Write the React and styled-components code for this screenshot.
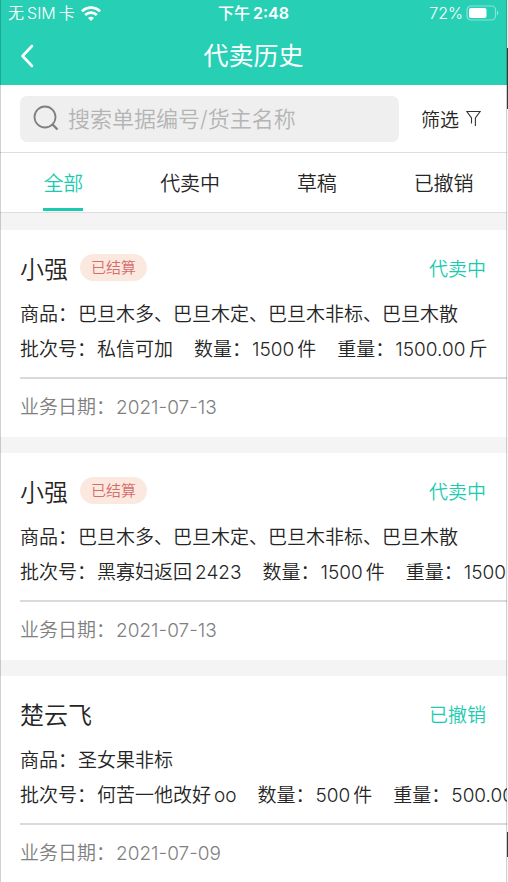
import React, { useState } from "react";
import styled, { createGlobalStyle } from "styled-components";

const GlobalStyle = createGlobalStyle`
  * { box-sizing: border-box; }
  body {
    margin: 0;
    background: #f4f4f4;
    color: #252525;
    font-family: Inter, "Noto Sans CJK SC", sans-serif;
    font-size: 19px;
    font-weight: 350;
  }
  button, input { font: inherit; color: inherit; border: 0; background: none; padding: 0; }
  button { cursor: pointer; }
`;

const Shell = styled.div`
  display: grid;
  grid-template-columns: minmax(0, 1fr) 1px;
  height: 100vh;
  overflow: hidden;
`;

const Backdrop = styled.div`
  background: linear-gradient(
    #e4eeee 48px, #34393c 48px, #34393c 109px, #f7f7f7 109px,
    #f7f7f7 832px, #34393c 832px, #34393c 857px, #f7f7f7 857px
  );
`;

const Screen = styled.div`
  position: relative;
  overflow: hidden;
  &::after {
    content: "";
    position: absolute;
    inset: 0;
    border: solid rgba(0, 0, 0, 0.18);
    border-width: 0 1px;
    pointer-events: none;
  }
`;

const Header = styled.header`
  background: #27cfb5;
  color: #fff;
`;

const StatusBar = styled.div`
  display: grid;
  grid-template-columns: 1fr auto 1fr;
  align-items: center;
  height: 26px;
  padding: 0 8px;
  font-size: 16px;
  line-height: 26px;
`;

const StatusGroup = styled.div`
  display: flex;
  align-items: center;
  justify-content: ${(p) => (p.$end ? "flex-end" : "flex-start")};
  gap: ${(p) => (p.$wide ? 6 : 3)}px;
  white-space: nowrap;
  font-weight: ${(p) => (p.$strong ? 600 : 350)};
`;

const ClockPrefix = styled.span`
  font-weight: 500;
`;

const NavBar = styled.div`
  display: grid;
  grid-template-columns: 60px 1fr 60px;
  align-items: center;
  height: 59px;
`;

const BackButton = styled.button`
  display: flex;
  padding: 8px 0 8px 20px;
`;

const Title = styled.h1`
  margin: 0;
  text-align: center;
  font-size: 25px;
  font-weight: 400;
  line-height: 36px;
`;

const SearchRow = styled.form`
  display: flex;
  align-items: center;
  height: 68px;
  padding: 0 26px 0 20px;
  gap: 22px;
  background: #fff;
  border-bottom: 1px solid #dedede;
`;

const SearchBox = styled.label`
  display: flex;
  align-items: center;
  flex: 1;
  min-width: 0;
  height: 46px;
  padding: 0 12px;
  gap: 8px;
  border-radius: 7px;
  background: #efefef;
  svg { flex: none; }
`;

const SearchInput = styled.input`
  flex: 1;
  min-width: 0;
  height: 100%;
  font-size: 22px;
  outline: none;
  &::placeholder { color: #b4b4b4; opacity: 1; }
`;

const FilterButton = styled.button`
  display: flex;
  align-items: center;
  gap: 7px;
  white-space: nowrap;
`;

const Tabs = styled.nav`
  display: grid;
  grid-template-columns: repeat(4, 1fr);
  height: 60px;
  background: #fff;
  border-bottom: 1px solid #dedede;
`;

const Tab = styled.button`
  justify-self: center;
  height: 58px;
  padding-top: 3px;
  font-size: 20px;
  color: ${(p) => (p.$active ? "#1bcbb0" : "inherit")};
  border-bottom: 3px solid ${(p) => (p.$active ? "#1bcbb0" : "transparent")};
`;

const List = styled.main`
  display: grid;
  gap: 16px;
  padding-top: 17px;
`;

const Card = styled.article`
  padding: 10px 0 0 20px;
  overflow: hidden;
  background: #fff;
`;

const CardHead = styled.div`
  display: flex;
  align-items: center;
  gap: 12px;
  height: 57px;
  padding: 0 21px 3px 0;
`;

const Name = styled.h2`
  margin: 0;
  font-size: 24px;
  font-weight: 350;
`;

const Badge = styled.span`
  padding: 0 11px;
  border-radius: 14px;
  background: #fbe9e0;
  color: #d66c6c;
  font-size: 15px;
  line-height: 27px;
`;

const State = styled.span`
  margin-left: auto;
  color: #1bcbb0;
`;

const Line = styled.div`
  display: flex;
  gap: 21px;
  line-height: 35px;
  white-space: nowrap;
`;

const Field = styled.span`
  display: flex;
  gap: 1px;
`;

const Mixed = styled.span`
  display: flex;
  gap: 3px;
`;

const CardFoot = styled.div`
  display: flex;
  gap: 1px;
  margin-top: 10px;
  border-top: 2px solid #dadada;
  color: #808080;
  line-height: 58px;
`;

const records = [
  {
    name: "小强", settled: true, state: "代卖中",
    goods: "巴旦木多、巴旦木定、巴旦木非标、巴旦木散",
    batch: ["私信可加"], count: "1500", weight: "1500.00", date: "2021-07-13",
  },
  {
    name: "小强", settled: true, state: "代卖中",
    goods: "巴旦木多、巴旦木定、巴旦木非标、巴旦木散",
    batch: ["黑寡妇返回", "2423"], count: "1500", weight: "1500.00", date: "2021-07-13",
  },
  {
    name: "楚云飞", settled: false, state: "已撤销",
    goods: "圣女果非标",
    batch: ["何苦一他改好", "oo"], count: "500", weight: "500.00", date: "2021-07-09",
  },
];

const tabs = ["全部", "代卖中", "草稿", "已撤销"];

function MixedText({ parts }) {
  return <Mixed>{parts.map((part) => <span key={part}>{part}</span>)}</Mixed>;
}

function WifiIcon() {
  return (
    <svg width="20" height="15" viewBox="0 0 20 15" fill="none" stroke="#fff" strokeWidth="2.7" aria-hidden="true">
      <path d="M.9 5.4C6 .4 14 .4 19.1 5.4" />
      <path d="M4.1 9c3.3-3.2 8.5-3.2 11.8 0" />
      <path d="M10 15 7 11.9c1.8-1.5 4.2-1.5 6 0z" fill="#fff" stroke="none" />
    </svg>
  );
}

function BatteryIcon() {
  return (
    <svg width="33" height="16" viewBox="0 0 33 16" fill="none" aria-hidden="true">
      <rect x="1" y="1" width="28.5" height="14" rx="4" stroke="#fff" strokeOpacity=".45" strokeWidth="1.2" />
      <rect x="3" y="3" width="17.5" height="10" rx="2" fill="#fff" />
      <path d="M31 5.5c1.6.8 1.6 4.2 0 5z" fill="#fff" fillOpacity=".5" />
    </svg>
  );
}

function RecordCard({ record }) {
  return (
    <Card>
      <CardHead>
        <Name>{record.name}</Name>
        {record.settled && <Badge>已结算</Badge>}
        <State>{record.state}</State>
      </CardHead>
      <Line>
        <Field><span>商品：</span><span>{record.goods}</span></Field>
      </Line>
      <Line>
        <Field><span>批次号：</span><MixedText parts={record.batch} /></Field>
        <Field><span>数量：</span><MixedText parts={[record.count, "件"]} /></Field>
        <Field><span>重量：</span><MixedText parts={[record.weight, "斤"]} /></Field>
      </Line>
      <CardFoot><span>业务日期：</span><time dateTime={record.date}>{record.date}</time></CardFoot>
    </Card>
  );
}

export default function App() {
  const [active, setActive] = useState("全部");
  return (
    <>
      <GlobalStyle />
      <Shell>
        <Screen>
          <Header>
            <StatusBar>
              <StatusGroup $wide>
                <MixedText parts={["无", "SIM", "卡"]} />
                <WifiIcon />
              </StatusGroup>
              <StatusGroup $strong><ClockPrefix>下午</ClockPrefix><span>2:48</span></StatusGroup>
              <StatusGroup $end><span>72%</span><BatteryIcon /></StatusGroup>
            </StatusBar>
            <NavBar>
              <BackButton type="button" aria-label="返回">
                <svg width="14" height="24" viewBox="0 0 14 24" fill="none" stroke="#fff" strokeWidth="2.6" strokeLinecap="round" strokeLinejoin="round">
                  <path d="M12 2 2.5 12 12 22" />
                </svg>
              </BackButton>
              <Title>代卖历史</Title>
            </NavBar>
          </Header>
          <SearchRow onSubmit={(e) => e.preventDefault()}>
            <SearchBox>
              <svg width="28" height="28" viewBox="0 0 28 28" fill="none" stroke="#808080" strokeWidth="1.8" aria-hidden="true">
                <circle cx="13" cy="12" r="10.5" />
                <path d="m20 19 5.5 5.5" strokeWidth="2.4" />
              </svg>
              <SearchInput type="text" aria-label="搜索" placeholder="搜索单据编号/货主名称" />
            </SearchBox>
            <FilterButton type="button">
              筛选
              <svg width="15" height="17" viewBox="0 0 15 17" fill="none" stroke="#333" strokeWidth="1.1" aria-hidden="true">
                <path d="M5.5 13.5V8L.9 1.5h13.2L9.4 8v8" />
              </svg>
            </FilterButton>
          </SearchRow>
          <Tabs>
            {tabs.map((tab) => (
              <Tab key={tab} type="button" $active={tab === active} onClick={() => setActive(tab)}>{tab}</Tab>
            ))}
          </Tabs>
          <List>
            {records.map((record, i) => <RecordCard key={i} record={record} />)}
          </List>
        </Screen>
        <Backdrop />
      </Shell>
    </>
  );
}
